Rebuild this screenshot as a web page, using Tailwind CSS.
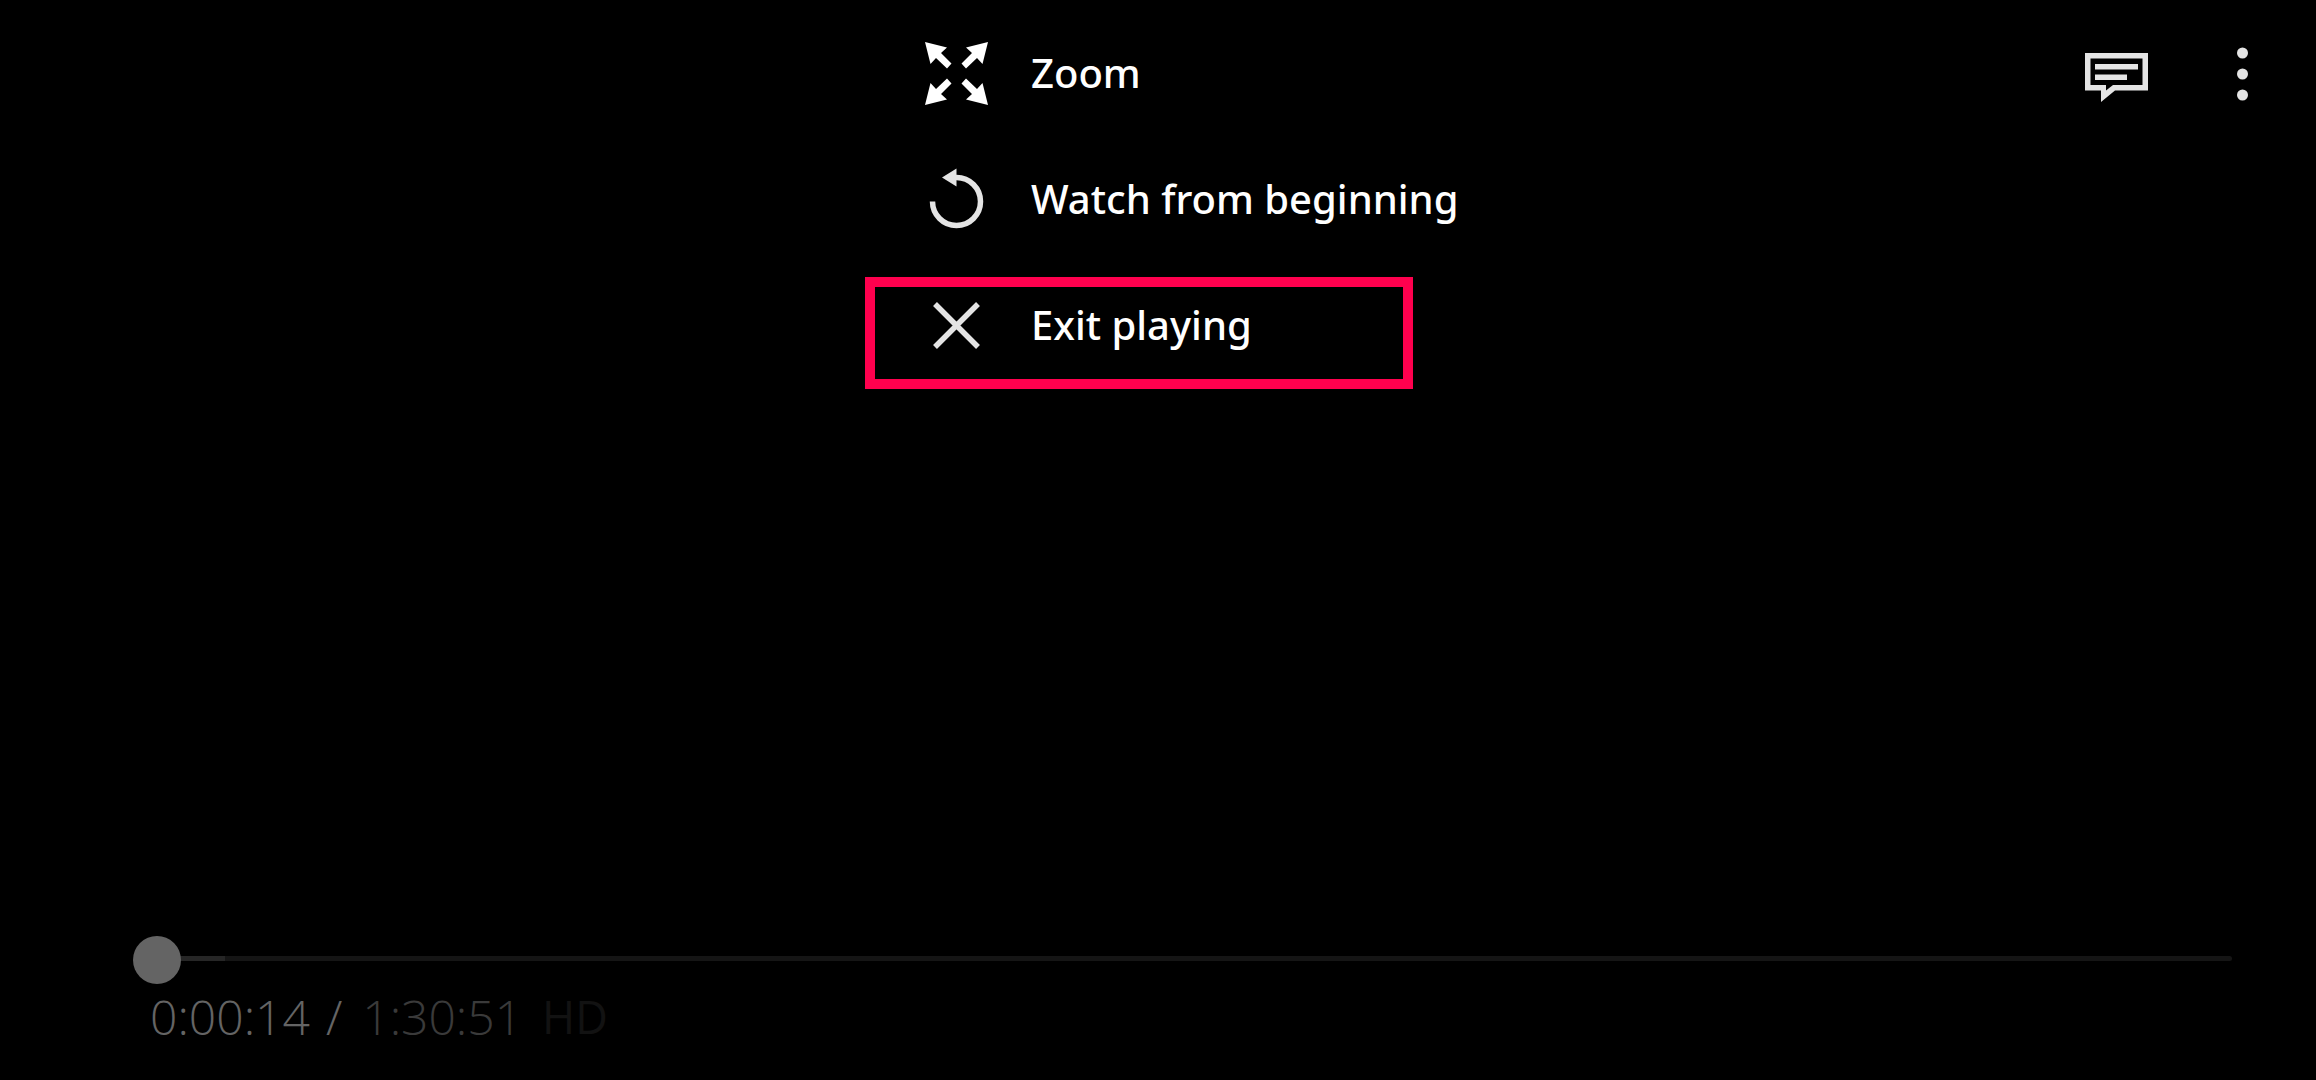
<!DOCTYPE html>
<html lang="en">
<head>
  <meta charset="UTF-8" />
  <meta name="viewport" content="width=device-width, initial-scale=1.0" />
  <title>Player</title>
  <script src="https://cdn.jsdelivr.net/npm/@tailwindcss/browser@4"></script>
</head>
<body class="bg-black min-h-screen flex flex-col justify-between text-white font-['Noto_Sans',sans-serif]">

  <!-- Top bar: menu and player actions -->
  <header class="flex items-start pt-[10px]">
    <div class="flex-[925]"></div>

    <nav class="relative w-[531px] shrink-0">
      <button class="flex items-center gap-[43px] h-[126px] text-[40px] font-medium whitespace-nowrap">
        <svg class="w-[63px] h-[63px] shrink-0" viewBox="0 0 63 63" fill="#fff">
          <path id="arrow" d="M0 0L22 5.500L16 11L26.500 21.500L22 26.500L11 16L5.500 22Z" />
          <use href="#arrow" transform="translate(63 0) scale(-1 1)" />
          <use href="#arrow" transform="translate(0 63) scale(1 -1)" />
          <use href="#arrow" transform="translate(63 63) scale(-1 -1)" />
        </svg>
        Zoom
      </button>
      <button class="flex items-center gap-[43px] h-[126px] text-[40px] font-medium whitespace-nowrap">
        <svg class="w-[63px] h-[63px] shrink-0" viewBox="0 0 63 63">
          <path d="M7.500 33.500A24 24 0 1 0 31.500 9.500H29" fill="none" stroke="#e4e4e4" stroke-width="5.500" />
          <path d="M17 9.500L31.500 0.500V18.500Z" fill="#e4e4e4" />
        </svg>
        Watch from beginning
      </button>
      <button class="flex items-center gap-[43px] h-[126px] text-[40px] font-medium whitespace-nowrap">
        <svg class="w-[63px] h-[63px] shrink-0" viewBox="0 0 63 63">
          <path d="M10 10L53 53M53 10L10 53" stroke="#e4e4e4" stroke-width="5.500" />
        </svg>
        Exit playing
      </button>
      <!-- Highlight around the last item -->
      <div class="absolute -left-[60px] top-[267px] w-[548px] h-[112px] border-[10px] border-[#ff004e] pointer-events-none"></div>
    </nav>

    <div class="flex-[860]">
      <div class="flex items-center justify-end gap-[89px] h-[126px] pr-[68px]">
        <button aria-label="Subtitles">
          <svg class="block w-[63px] h-[63px]" viewBox="0 0 63 63">
            <path d="M0 11H63V48.500H30L16 60V48.500H0ZM5.500 16.500V43H21V48.500L28 43H57.500V16.500Z" fill="#e4e4e4" fill-rule="evenodd" />
            <path d="M10 22H53V27.500H10ZM10 32.500H42V38H10Z" fill="#e4e4e4" />
          </svg>
        </button>
        <button aria-label="More options">
          <svg class="block w-[11px] h-[63px]" viewBox="0 0 11 63" fill="#e4e4e4">
            <circle cx="5.500" cy="11" r="5.500" />
            <circle cx="5.500" cy="32" r="5.500" />
            <circle cx="5.500" cy="53" r="5.500" />
          </svg>
        </button>
      </div>
    </div>
  </header>

  <!-- Seek bar and time -->
  <footer class="pl-32 pr-[84px] pb-[33px]">
    <input type="range" min="0" max="5451" value="14" aria-label="Seek"
      class="block w-full h-12 appearance-none bg-transparent
        [&::-webkit-slider-runnable-track]:h-[5px] [&::-webkit-slider-runnable-track]:rounded-full
        [&::-webkit-slider-runnable-track]:bg-[linear-gradient(to_right,transparent_24px,#262626_24px,#262626_97px,#151515_97px)]
        [&::-webkit-slider-thumb]:appearance-none [&::-webkit-slider-thumb]:w-12 [&::-webkit-slider-thumb]:h-12
        [&::-webkit-slider-thumb]:-mt-5 [&::-webkit-slider-thumb]:rounded-full [&::-webkit-slider-thumb]:bg-[#646464]" />
    <div class="flex items-center pl-[22px] mt-[5px] text-[48px] leading-[60px] font-light font-['Open_Sans',sans-serif]">
      <span class="text-[#646464]">0:00:14</span>
      <span class="text-[#646464] ml-4">/</span>
      <span class="text-[#3a3a3a] ml-5">1:30:51</span>
      <span class="text-[#121212] ml-5 text-[45px] font-normal">HD</span>
    </div>
  </footer>

</body>
</html>
